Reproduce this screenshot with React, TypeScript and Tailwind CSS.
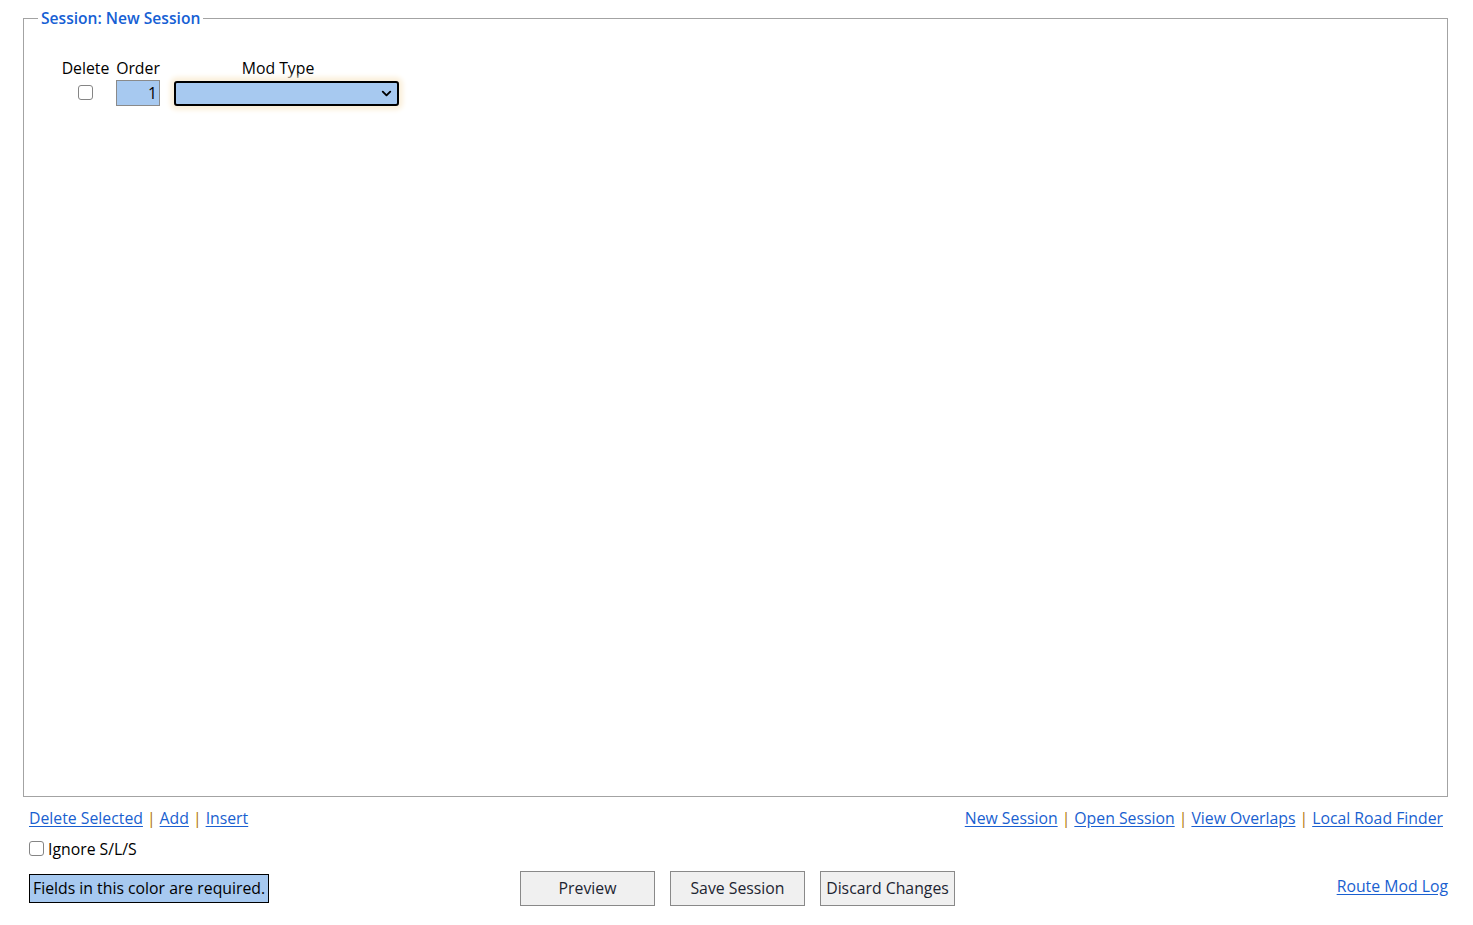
import { ChevronDown } from "lucide-react"

const link = "text-[#1a5fd0] underline underline-offset-2"

function Sep() {
  return <span className="mx-[4px] text-[#b07408]">|</span>
}

function Box({ className = "" }: { className?: string }) {
  return (
    <span
      className={`inline-block w-[15px] h-[15px] bg-white border border-[#858585] rounded-[3px] ${className}`}
    />
  )
}

export default function App() {
  return (
    <div className="bg-white min-h-[925px] pl-[23px] pr-[25px] pt-[8px] text-[15.8px] text-black font-['Open_Sans',sans-serif]">
      <fieldset className="border border-[#a3a3a3] h-[789px] pl-[35px]">
        <legend className="ml-[-21px] px-[3px] text-[15.6px] font-semibold text-[#1660d4] leading-[20px]">
          Session: New Session
        </legend>
        <div className="mt-[30px] flex flex-col">
          <div className="flex h-[20px] items-center leading-[20px]">
            <div className="w-[53px] text-center">Delete</div>
            <div className="w-[52px] text-center">Order</div>
            <div className="w-[228px] text-center">Mod Type</div>
          </div>
          <div className="flex items-center h-[36px] mt-[-3px]">
            <div className="w-[53px] flex justify-center">
              <Box className="mt-[-2px]" />
            </div>
            <div className="w-[52px] flex justify-center">
              <div className="w-[44px] h-[26px] bg-[#a7c9f0] border border-[#8a8a8a] text-right pr-[2px] leading-[24px]">
                1
              </div>
            </div>
            <div className="ml-[10px] w-[225px] h-[25px] bg-[#a7c9f0] border-2 border-black rounded-[3px] shadow-[0_0_5px_4px_#fbf0dc] flex items-center justify-end pr-[3px]">
              <ChevronDown size={15} strokeWidth={3} />
            </div>
          </div>
        </div>
      </fieldset>

      <div className="flex justify-between pl-[6px] pr-[5px] mt-[9px] leading-[24px]">
        <div>
          <a className={link}>Delete Selected</a>
          <Sep />
          <a className={link}>Add</a>
          <Sep />
          <a className={link}>Insert</a>
        </div>
        <div>
          <a className={link}>New Session</a>
          <Sep />
          <a className={link}>Open Session</a>
          <Sep />
          <a className={link}>View Overlaps</a>
          <Sep />
          <a className={link}>Local Road Finder</a>
        </div>
      </div>

      <div className="flex items-center px-[6px] mt-[9px] h-[22px]">
        <Box className="mt-[-4px] mr-[4px]" />
        <span>Ignore S/L/S</span>
      </div>

      <div className="flex items-center mt-[10px] pl-[6px]">
        <div className="w-[491px]">
          <span className="inline-block bg-[#a7c9f0] border border-black px-[3px] h-[29px] leading-[27px]">
            Fields in this color are required.
          </span>
        </div>
        <div className="flex gap-[15px]">
          {["Preview", "Save Session", "Discard Changes"].map((b) => (
            <button
              key={b}
              className="w-[135px] h-[35px] bg-[#f0f0f0] border border-[#898989] text-[#1d2532]"
            >
              {b}
            </button>
          ))}
        </div>
        <div className="flex-1 text-right mt-[-3px]">
          <a className={link}>Route Mod Log</a>
        </div>
      </div>
    </div>
  )
}
